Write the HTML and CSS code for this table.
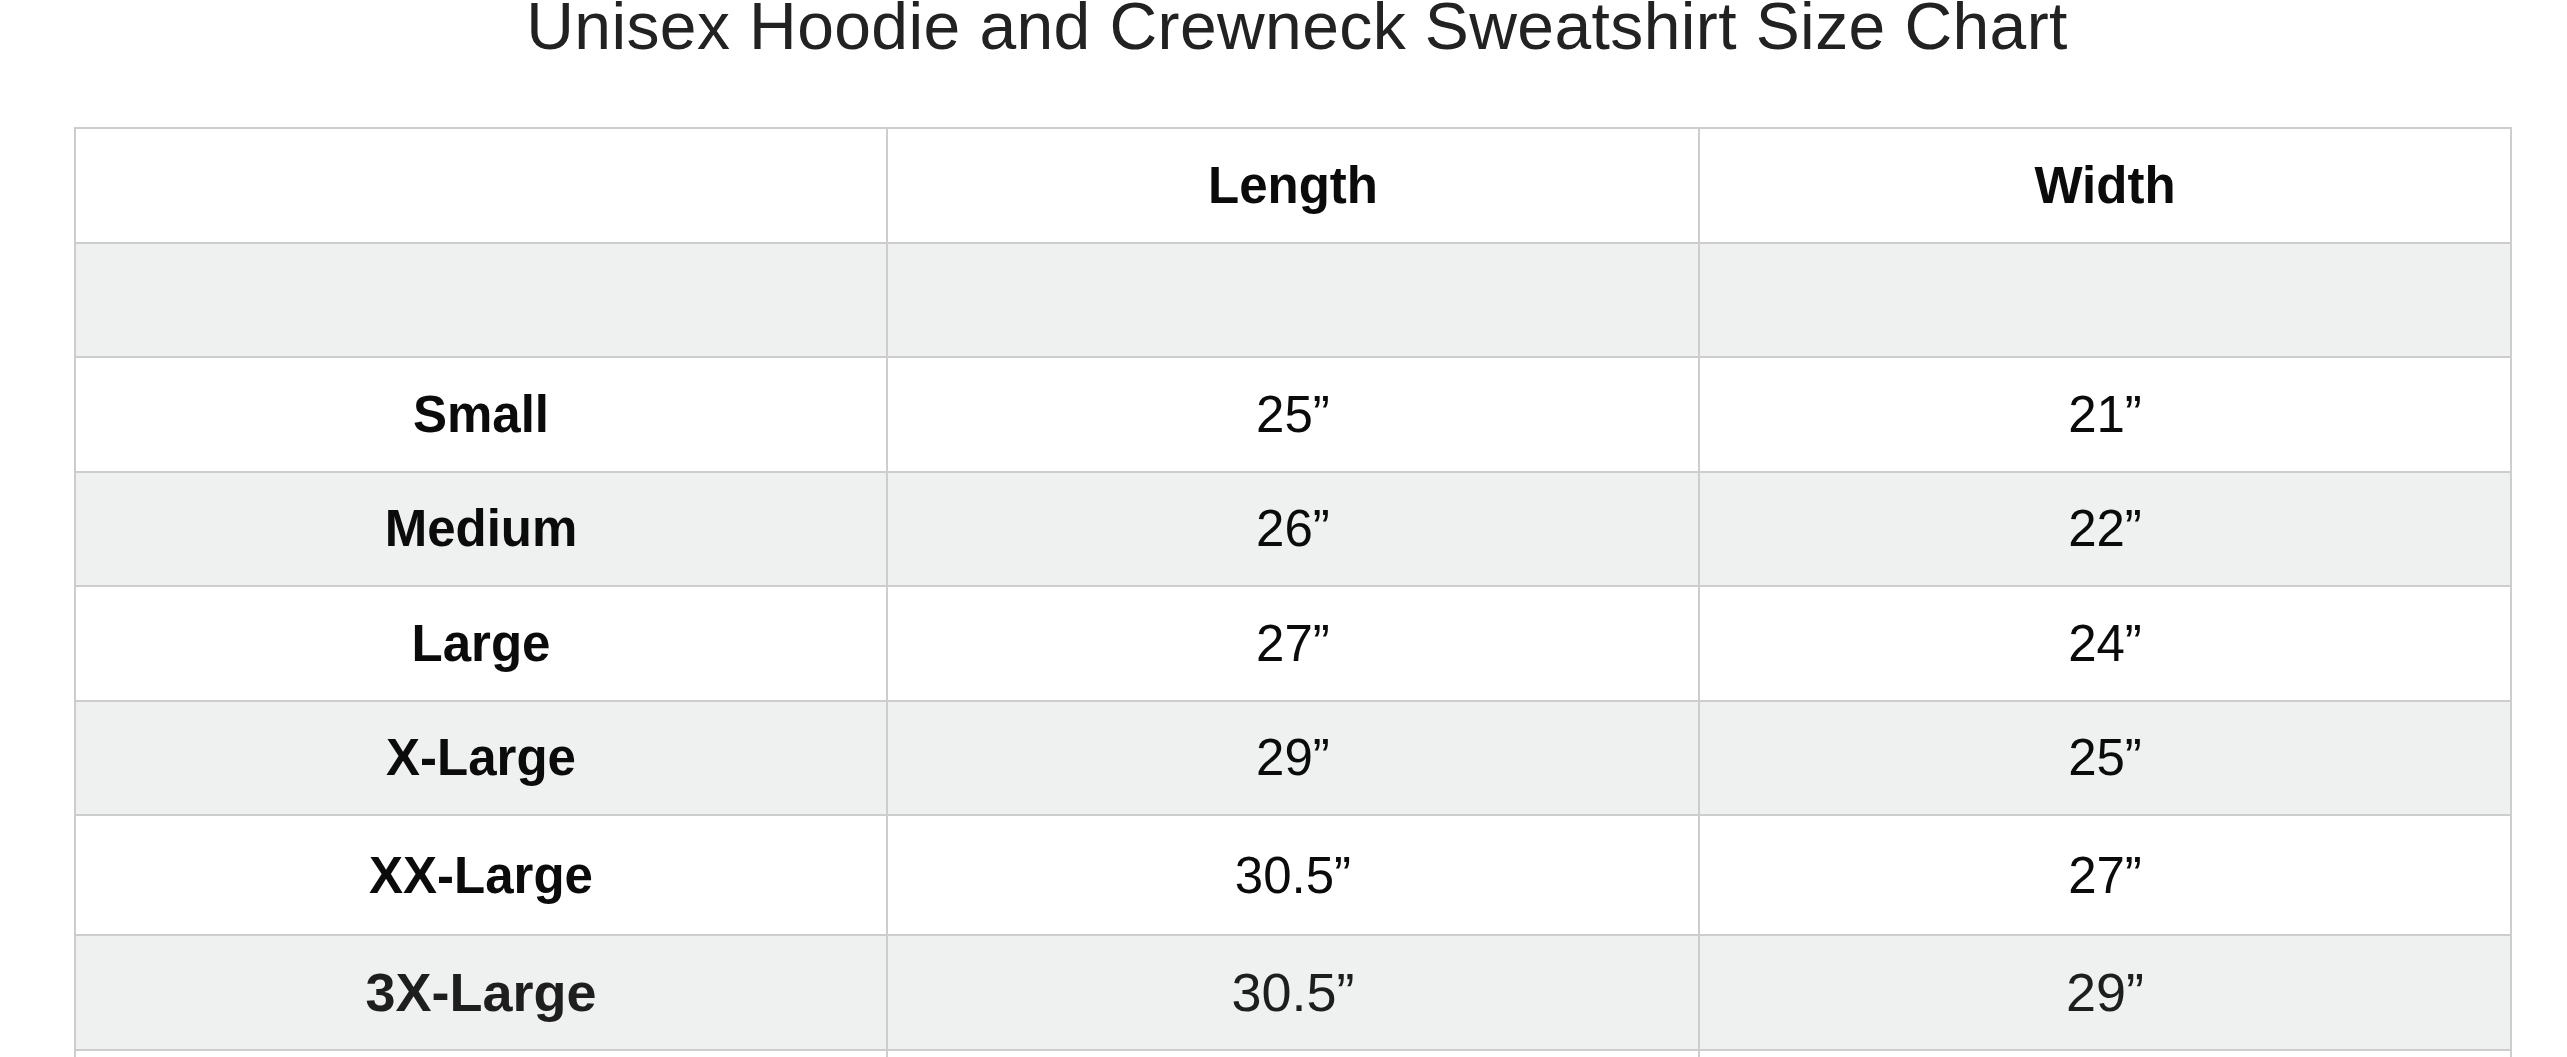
FILE: index.html
```html
<!DOCTYPE html>
<html lang="en">
<head>
<meta charset="utf-8">
<title>Unisex Hoodie and Crewneck Sweatshirt Size Chart</title>
<link rel="stylesheet" href="styles.css">
</head>
<body>
<main class="chart">
  <h1 class="chart-title">Unisex Hoodie and Crewneck Sweatshirt Size Chart</h1>
  <table class="size-table">
    <colgroup>
      <col class="col"><col class="col"><col class="col">
    </colgroup>
    <tbody>
      <tr class="row row-white head">
        <td></td><td class="bold">Length</td><td class="bold">Width</td>
      </tr>
      <tr class="row row-gray"><td></td><td></td><td></td></tr>
      <tr class="row row-white"><td class="bold">Small</td><td>25”</td><td>21”</td></tr>
      <tr class="row row-gray"><td class="bold">Medium</td><td>26”</td><td>22”</td></tr>
      <tr class="row row-white"><td class="bold">Large</td><td>27”</td><td>24”</td></tr>
      <tr class="row row-gray"><td class="bold">X-Large</td><td>29”</td><td>25”</td></tr>
      <tr class="row row-white row-tall"><td class="bold">XX-Large</td><td>30.5”</td><td>27”</td></tr>
      <tr class="row row-gray row-big"><td class="bold">3X-Large</td><td>30.5”</td><td>29”</td></tr>
      <tr class="row row-white"><td></td><td></td><td></td></tr>
    </tbody>
  </table>
</main>
</body>
</html>
```
FILE: styles.css
```css
html, body {
  margin: 0;
  padding: 0;
  background: #ffffff;
}

body {
  font-family: "Liberation Sans", Arial, sans-serif;
  overflow: hidden;
}

.chart {
  width: 2438px;
  margin-left: 74px;
  display: flex;
  flex-direction: column;
}

.chart-title {
  margin: 0 0 0 8px;
  font-size: 66px;
  line-height: 52px;
  letter-spacing: 0.4px;
  font-weight: normal;
  color: #222222;
  text-align: center;
  white-space: nowrap;
}

.size-table {
  margin-top: 75px;
  width: 2438px;
  border-collapse: collapse;
  table-layout: fixed;
  border: 2px solid #cccccc;
}

.col {
  width: 33.333%;
}

.size-table td {
  border: 2px solid #cdcdcd;
  padding: 0;
  height: 112.5px;
  text-align: center;
  vertical-align: middle;
  font-size: 51px;
  color: #0b0b0b;
}

.size-table td.bold {
  font-weight: bold;
}

.row-white {
  background: #ffffff;
}

.row-gray {
  background: #eff0f0;
}

.row-tall td {
  height: 118px;
}

.row-big td {
  font-size: 54px;
  color: #1e1e1e;
}
```
